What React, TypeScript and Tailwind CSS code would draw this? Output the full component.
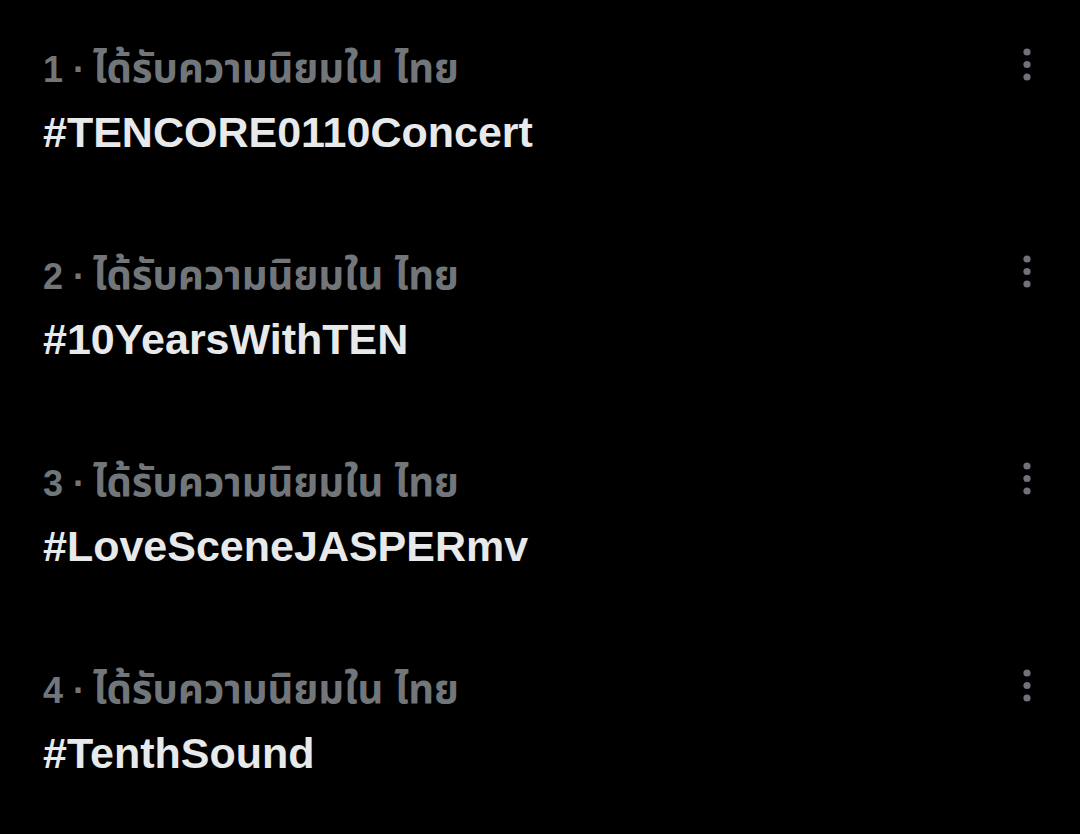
import React from 'react';

const trends = [
  { rank: 1, tag: '#TENCORE0110Concert' },
  { rank: 2, tag: '#10YearsWithTEN' },
  { rank: 3, tag: '#LoveSceneJASPERmv' },
  { rank: 4, tag: '#TenthSound' },
];

function MoreIcon() {
  return (
    <svg width="10" height="34" viewBox="0 0 10 34" className="text-[#6f7378]">
      <circle cx="5" cy="5" r="3.6" fill="currentColor" />
      <circle cx="5" cy="17.5" r="3.6" fill="currentColor" />
      <circle cx="5" cy="30" r="3.6" fill="currentColor" />
    </svg>
  );
}

export default function App() {
  return (
    <div
      className="w-[1080px] h-[834px] bg-black overflow-hidden pt-[44px] flex flex-col gap-[93px]"
      style={{ fontFamily: '"Liberation Sans", "Noto Sans", "Noto Sans Thai", sans-serif' }}
    >
      {trends.map((t) => (
        <div key={t.rank} className="relative pl-[43px] pr-[44px]">
          <div className="h-[48px] flex items-baseline leading-[48px] font-bold text-[#71767b]">
            <span className="text-[36px]">{t.rank} ·</span>
            <span className="ml-[8px] text-[40px]">ได้รับความนิยมใน ไทย</span>
          </div>
          <div className="mt-[14px] h-[52px] leading-[52px] text-[43px] font-bold text-[#e7e9ea]">
            {t.tag}
          </div>
          <div className="absolute right-[48px] top-[3px]">
            <MoreIcon />
          </div>
        </div>
      ))}
    </div>
  );
}
